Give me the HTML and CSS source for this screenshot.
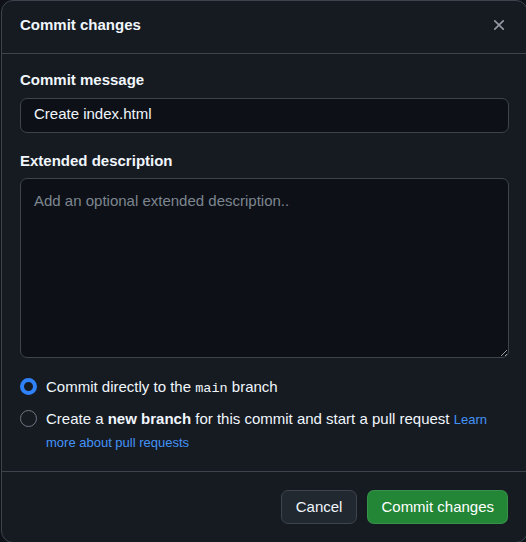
FILE: index.html
```html
<!DOCTYPE html>
<html lang="en">
<head>
<meta charset="utf-8">
<title>Commit changes</title>
<link rel="stylesheet" href="styles.css">
</head>
<body>
<div class="dialog">
  <div class="dialog-header">
    <h1 class="dialog-title">Commit changes</h1>
    <button class="close-btn" aria-label="Close">
      <svg width="18" height="18" viewBox="0 0 16 16"><path fill="currentColor" d="M3.72 3.72a.75.75 0 0 1 1.06 0L8 6.94l3.220-3.22a.749.749 0 0 1 1.275.326.749.749 0 0 1-.215.734L9.06 8l3.22 3.22a.749.749 0 0 1-.326 1.275.749.749 0 0 1-.734-.215L8 9.06l-3.22 3.22a.751.751 0 0 1-1.042-.018.751.751 0 0 1-.018-1.042L6.94 8 3.72 4.78a.75.75 0 0 1 0-1.06Z"/></svg>
    </button>
  </div>
  <div class="dialog-body">
    <label class="field-label" for="msg">Commit message</label>
    <input id="msg" class="text-input" type="text" value="Create index.html">
    <label class="field-label second" for="desc">Extended description</label>
    <textarea id="desc" class="text-area" placeholder="Add an optional extended description.."></textarea>
    <div class="options">
      <div class="option">
        <span class="radio checked"></span>
        <span class="option-text">Commit directly to the <code class="mono">main</code> branch</span>
      </div>
      <div class="option">
        <span class="radio"></span>
        <span class="option-text">Create a <strong>new branch</strong> for this commit and start a pull request <a class="link" href="#">Learn more about pull requests</a></span>
      </div>
    </div>
  </div>
  <div class="dialog-footer">
    <button class="btn btn-default">Cancel</button>
    <button class="btn btn-primary">Commit changes</button>
  </div>
</div>
</body>
</html>
```
FILE: styles.css
```css
* { box-sizing: border-box; }
html, body {
  margin: 0;
  padding: 0;
  background: #0e1117;
  overflow: hidden;
}
body {
  font-family: "Liberation Sans", Arial, sans-serif;
  color: #f0f6fc;
}
.dialog {
  width: 527px;
  height: 543px;
  margin-left: 1px;
  background: #161b22;
  border: 1px solid #3d444d;
  border-radius: 12px;
  display: flex;
  flex-direction: column;
}
.dialog-header {
  height: 53px;
  border-bottom: 1px solid #3d444d;
  padding: 0 12px 4px 18px;
  display: flex;
  align-items: center;
  justify-content: space-between;
}
.dialog-title {
  margin: 0;
  font-size: 15px;
  line-height: 22px;
  font-weight: 700;
}
.close-btn {
  width: 32px;
  height: 32px;
  border: 0;
  background: transparent;
  color: #9198a1;
  padding: 0;
  display: flex;
  align-items: center;
  justify-content: center;
}
.dialog-body {
  padding: 15px 18px 18px;
  display: flex;
  flex-direction: column;
  border-bottom: 1px solid #3d444d;
}
.field-label {
  font-size: 15px;
  line-height: 22px;
  font-weight: 700;
  margin-bottom: 7px;
}
.field-label.second { margin-top: 17px; margin-bottom: 6px; }
.text-input {
  height: 35px;
  width: 100%;
  background: #0d1117;
  border: 1px solid #3d444d;
  border-radius: 7px;
  color: #f0f6fc;
  font-family: "Liberation Sans", Arial, sans-serif;
  font-size: 15px;
  padding: 0 13px 4px;
  outline: none;
}
.text-area {
  height: 180px;
  width: 100%;
  background: #0d1117;
  border: 1px solid #3d444d;
  border-radius: 7px;
  color: #f0f6fc;
  font-family: "Liberation Sans", Arial, sans-serif;
  font-size: 15px;
  line-height: 22px;
  padding: 11px 13px;
  outline: none;
  resize: vertical;
}
.text-area::placeholder { color: #7d8590; }
.options {
  margin-top: 17px;
  display: flex;
  flex-direction: column;
  gap: 9px;
}
.option {
  display: flex;
  align-items: flex-start;
  gap: 9px;
  font-size: 15px;
  line-height: 23px;
}
.radio {
  flex: none;
  width: 17px;
  height: 17px;
  margin-top: 3px;
  border-radius: 50%;
  border: 1px solid #6e7681;
}
.radio.checked {
  border: 4.5px solid #2f81f7;
  background: #161b22;
}
.mono {
  font-family: "Liberation Mono", "DejaVu Sans Mono", monospace;
  font-size: 13.5px;
  line-height: 1;
}
.option strong { font-weight: 700; }
.link {
  color: #4493f8;
  font-size: 13px;
  line-height: 1;
  text-decoration: none;
}
.dialog-footer {
  padding: 18px 19px 0 18px;
  display: flex;
  justify-content: flex-end;
  gap: 10px;
}
.btn {
  height: 34px;
  padding: 0 13px 2px;
  border-radius: 7px;
  font-family: "Liberation Sans", Arial, sans-serif;
  font-size: 15px;
  border: 1px solid #3d444d;
}
.btn-default {
  background: #212830;
  color: #f0f6fc;
  padding: 0 14px 2px;
}
.btn-primary {
  background: #238636;
  border-color: rgba(240, 246, 252, 0.1);
  color: #ffffff;
}
```
